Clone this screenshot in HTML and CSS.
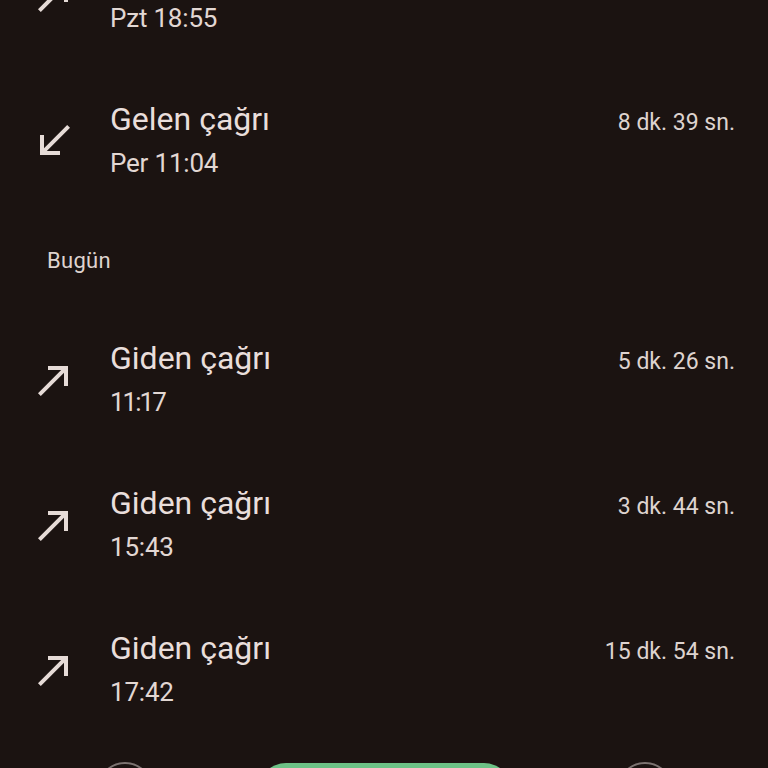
FILE: index.html
```html
<!DOCTYPE html>
<html lang="tr">
<head>
<meta charset="utf-8">
<link rel="stylesheet" href="styles.css">
</head>
<body>
<div class="screen">
  <div class="list">
    <div class="row">
      <div class="icon">
        <svg viewBox="0 0 24 24" width="48" height="48"><path fill="#e6dbd7" d="M9 5v2h6.59L4 18.59 5.41 20 17 8.41V15h2V5z"/></svg>
      </div>
      <div class="texts">
        <div class="title">Giden çağrı</div>
        <div class="sub">Pzt 18:55</div>
      </div>
      <div class="dur"></div>
    </div>
    <div class="row">
      <div class="icon">
        <svg viewBox="0 0 24 24" width="48" height="48"><path fill="#e6dbd7" d="M20 5.41L18.59 4 7 15.59V9H5v10h10v-2H8.41z"/></svg>
      </div>
      <div class="texts">
        <div class="title">Gelen çağrı</div>
        <div class="sub">Per 11:04</div>
      </div>
      <div class="dur">8 dk. 39 sn.</div>
    </div>
    <div class="header">Bugün</div>
    <div class="row">
      <div class="icon">
        <svg viewBox="0 0 24 24" width="48" height="48"><path fill="#e6dbd7" d="M9 5v2h6.59L4 18.59 5.41 20 17 8.41V15h2V5z"/></svg>
      </div>
      <div class="texts">
        <div class="title">Giden çağrı</div>
        <div class="sub narrow">11:17</div>
      </div>
      <div class="dur">5 dk. 26 sn.</div>
    </div>
    <div class="row">
      <div class="icon">
        <svg viewBox="0 0 24 24" width="48" height="48"><path fill="#e6dbd7" d="M9 5v2h6.59L4 18.59 5.41 20 17 8.41V15h2V5z"/></svg>
      </div>
      <div class="texts">
        <div class="title">Giden çağrı</div>
        <div class="sub">15:43</div>
      </div>
      <div class="dur">3 dk. 44 sn.</div>
    </div>
    <div class="row">
      <div class="icon">
        <svg viewBox="0 0 24 24" width="48" height="48"><path fill="#e6dbd7" d="M9 5v2h6.59L4 18.59 5.41 20 17 8.41V15h2V5z"/></svg>
      </div>
      <div class="texts">
        <div class="title">Giden çağrı</div>
        <div class="sub">17:42</div>
      </div>
      <div class="dur">15 dk. 54 sn.</div>
    </div>
  </div>
  <div class="bar">
    <div class="circle"></div>
    <div class="pill"></div>
    <div class="circle"></div>
  </div>
</div>
</body>
</html>
```
FILE: styles.css
```css
html, body {
  margin: 0;
  padding: 0;
  background: #1b1311;
}
.screen {
  width: 768px;
  height: 768px;
  overflow: hidden;
  background: #1b1311;
  font-family: Roboto, "Noto Sans", sans-serif;
  color: #e9dedb;
}
.list {
  margin-top: -77px;
}
.row {
  height: 145px;
  display: flex;
  align-items: center;
}
.icon {
  width: 110px;
  padding-left: 30px;
  box-sizing: border-box;
  display: flex;
  align-items: center;
}
.icon svg {
  display: block;
}
.texts {
  flex: 1;
}
.title {
  font-size: 32px;
  line-height: 44px;
}
.sub {
  font-size: 26px;
  line-height: 44px;
  color: #e2d7d3;
  letter-spacing: -0.2px;
}
.sub.narrow {
  letter-spacing: -2px;
}
.dur {
  align-self: center;
  margin-top: -36px;
  padding-right: 33px;
  font-size: 23px;
  color: #ded3cf;
}
.header {
  height: 94px;
  display: flex;
  align-items: center;
  padding-left: 47px;
  font-size: 22px;
  letter-spacing: 0.3px;
  color: #ded3cf;
}
.bar {
  display: flex;
  align-items: flex-start;
  padding-left: 97px;
  padding-top: 20px;
  gap: 105px;
}
.circle {
  width: 52px;
  height: 52px;
  border: 2px solid #7d7472;
  border-radius: 50%;
}
.pill {
  width: 254px;
  height: 56px;
  margin-top: 1px;
  border-radius: 28px;
  background: #6cc286;
}
```
